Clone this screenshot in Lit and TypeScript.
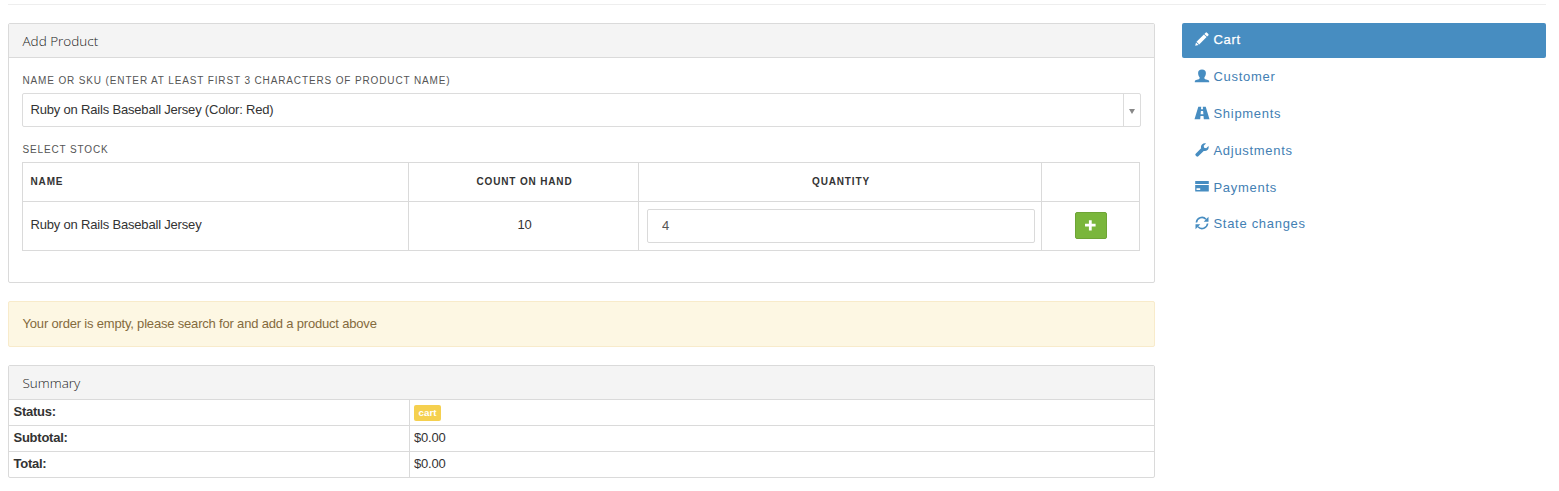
import { LitElement, html, css, svg } from "lit";
import { customElement } from "lit/decorators.js";
import { classMap } from "lit/directives/class-map.js";

const icons: Record<string, unknown> = {
  pencil: svg`<path d="M10.600 .7a1 1 0 0 1 1.400 0l1.300 1.300a1 1 0 0 1 0 1.400l-1.200 1.200-2.700-2.700z M8.900 2.400l2.700 2.700-7.400 7.400-2.700-2.700z M1 10.400l2.600 2.600-3.400.8z"/>`,
  user: svg`<path d="M7 .4c2.600 0 3.900 1.400 3.900 3.600 0 1.900-.7 3.200-1.500 4.200v1c0 .5 .3 .8 .8 1l2.700 .9c.8 .3 1.300 .8 1.300 1.600v.6H-.2v-.6c0-.8 .5-1.300 1.300-1.600L3.800 10.200c.5-.2 .8-.5 .8-1v-1C3.800 7.200 3.100 5.900 3.100 4 3.100 1.800 4.400 .4 7 .4z"/>`,
  road: svg`<path fill-rule="evenodd" d="M3.300 .8h2.900l-.2 2.400h2L7.800 .8h2.900L14.500 13.300H8.800L8.500 10h-3l-.3 3.300H-.5z M5.900 4.900 5.600 8.300h2.800l-.3-3.400z"/>`,
  wrench: svg`<path d="M13.500 2.900 11.200 5.200 9.100 4.800 8.700 2.800 11 .5C9.600 .1 8 .5 7 1.500 6 2.500 5.700 4 6.100 5.300L.7 10.700a1.350 1.350 0 0 0 0 1.900l.7.7a1.350 1.350 0 0 0 1.900 0L8.700 7.900c1.300.4 2.800.1 3.800-.9 1.100-1.100 1.400-2.700 1-4.100z"/>`,
  card: svg`<path fill-rule="evenodd" d="M.4 1h13.200l.2 .2V3.900H.2V1.200z M.2 5.100h13.600v6.100l-.2 .2H.4l-.2-.2z M1.500 8.200v1.800h3.700V8.200z"/>`,
  refresh: svg`<path d="M1.400 6.500A5.600 5.600 0 0 1 11 3.200M12.600 7.500A5.600 5.600 0 0 1 3 10.800" fill="none" stroke="currentColor" stroke-width="1.600"/><path d="M13.500 .7v5H8.700z M.5 13.300v-5h4.800z"/>`,
  plus: svg`<path d="M5.300 1.300h3v3.900h4.200v3H8.300v4.100h-3V8.200H1.100v-3h4.200z"/>`,
};

const icon = (name: string) =>
  html`<svg class="icon" viewBox="0 0 14 14" aria-hidden="true">${icons[name]}</svg>`;

const sections = [
  { label: "Cart", icon: "pencil", active: true },
  { label: "Customer", icon: "user" },
  { label: "Shipments", icon: "road" },
  { label: "Adjustments", icon: "wrench" },
  { label: "Payments", icon: "card" },
  { label: "State changes", icon: "refresh" },
];

@customElement("order-nav")
export class OrderNav extends LitElement {
  static styles = css`
    :host { display: block; }
    .list { display: flex; flex-direction: column; gap: 2px; }
    .item {
      display: flex; align-items: center; gap: 4.5px;
      box-sizing: border-box; height: 34.8px; padding: 0 13px;
      border-radius: 2px; text-decoration: none;
      font: 13px/18px "Liberation Sans", Arial, sans-serif; letter-spacing: .7px;
      color: #4380b3;
    }
    .icon { width: 14px; height: 14px; margin-bottom: 2px; fill: currentColor; color: #478dc1; overflow: visible; }
    .active, .active .icon { color: #fff; }
    .active { background: #478dc1; -webkit-text-stroke: .25px #fff; }
  `;
  render() {
    return html`<nav class="list">
      ${sections.map((s) => html`<a class=${classMap({ item: true, active: !!s.active })}>
        ${icon(s.icon)}<span>${s.label}</span></a>`)}
    </nav>`;
  }
}

@customElement("app-root")
export class AppRoot extends LitElement {
  static styles = css`
    :host {
      display: block; box-sizing: border-box; height: 491px; padding: 4px 13px 0 8px;
      background: #fff; color: #333; overflow: hidden;
      font: 13px/18px "Liberation Sans", Arial, sans-serif; letter-spacing: -.185px;
    }
    * { box-sizing: border-box; }
    .rule { height: 1px; background: #eee; margin-bottom: 18px; }
    .layout { display: grid; grid-template-columns: 1147px 364px; gap: 27px; align-items: start; }
    .main { display: flex; flex-direction: column; gap: 18px; }
    .panel { border: 1px solid #dadada; border-radius: 2px; }
    .add { height: 260px; }
    .heading {
      height: 34px; padding: 1px 13.5px 0; background: #f4f4f4; border-bottom: 1px solid #dadada;
      font: 300 13.5px/33px "Open Sans", sans-serif; color: #222; letter-spacing: 0;
    }
    .body { padding: 14px 13px 0; }
    .label {
      display: block; height: 18px; margin-bottom: 3px; padding-left: .4px; color: #555;
      font-size: 10px; line-height: 18px; letter-spacing: .865px; text-transform: uppercase;
    }
    .select {
      display: flex; height: 34px; width: 1119px; border: 1px solid #dcdcdc; border-radius: 2px;
      margin-bottom: 14px; line-height: 31px;
    }
    .chosen { flex: 1; padding-left: 7.5px; }
    .arrow { width: 17px; border-left: 1px solid #dcdcdc; display: grid; place-items: center; padding-top: 3px; }
    .arrow svg { width: 6px; height: 5px; fill: #888; }
    .stock { width: 1118px; border: 1px solid #dadada; border-width: 1px 0 0 1px; }
    .row { display: grid; grid-template-columns: 386px 230px 403px 98px; }
    .cell {
      display: flex; align-items: center; justify-content: center;
      border: solid #dadada; border-width: 0 1px 1px 0; padding: 0 6px 0 8px; height: 49px;
    }
    .row.head .cell { height: 39px; font-size: 10px; font-weight: bold; letter-spacing: .85px; text-transform: uppercase; }
    .cell:first-child { justify-content: flex-start; }
    .row .cell:first-child { padding-left: 7.5px; }
    .row .cell:last-child { padding: 0 7px 1px; }
    .text { padding-bottom: 3px; }
    .input {
      flex: 1; height: 34px; border: 1px solid #dadada; border-radius: 2px;
      padding: 0 14px 1px; font: inherit; color: #555; background: #fff; min-width: 0; outline: none;
    }
    .button {
      display: grid; place-items: center; width: 32px; height: 27px; padding: 0;
      background: #7ab63c; border: 1px solid #6ea436; border-radius: 2px; color: #fff;
    }
    .button .icon { width: 13px; height: 13px; fill: currentColor; }
    .alert {
      height: 46px; padding: 0 13.5px; line-height: 43px; color: #846a3d;
      background: #fdf7e3; border: 1px solid #f8ebcb; border-radius: 2px;
    }
    .line { display: grid; grid-template-columns: 401px 1fr; height: 26px; line-height: 23px; border-bottom: 1px solid #dadada; }
    .line:last-child { border-bottom: 0; height: 25px; }
    .term { padding-left: 4.5px; border-right: 1px solid #dadada; font-weight: bold; letter-spacing: -.25px; }
    .value { padding-left: 4px; }
    .badge {
      display: block; width: 27px; height: 16px; margin-top: 5px; border-radius: 2px; letter-spacing: 0;
      background: #f5d04f; color: #fff; font-size: 9.75px; font-weight: bold; line-height: 16px; text-align: center;
    }
  `;
  render() {
    return html`
      <div class="rule"></div>
      <div class="layout">
        <main class="main">
          <section class="panel add">
            <div class="heading">Add Product</div>
            <div class="body">
              <label class="label">Name or SKU (enter at least first 3 characters of product name)</label>
              <div class="select">
                <span class="chosen">Ruby on Rails Baseball Jersey (Color: Red)</span>
                <span class="arrow"><svg viewBox="0 0 6 5"><path d="M0 0h6L3 5z"/></svg></span>
              </div>
              <label class="label">Select stock</label>
              <div class="stock">
                <div class="row head">
                  <div class="cell">Name</div><div class="cell">Count on hand</div>
                  <div class="cell">Quantity</div><div class="cell"></div>
                </div>
                <div class="row">
                  <div class="cell"><span class="text">Ruby on Rails Baseball Jersey</span></div>
                  <div class="cell"><span class="text">10</span></div>
                  <div class="cell"><input class="input" .value=${"4"}></div>
                  <div class="cell"><button class="button" aria-label="Add">${icon("plus")}</button></div>
                </div>
              </div>
            </div>
          </section>
          <div class="alert">Your order is empty, please search for and add a product above</div>
          <section class="panel">
            <div class="heading">Summary</div>
            <div class="line"><div class="term">Status:</div><div class="value"><span class="badge">cart</span></div></div>
            <div class="line"><div class="term">Subtotal:</div><div class="value">$0.00</div></div>
            <div class="line"><div class="term">Total:</div><div class="value">$0.00</div></div>
          </section>
        </main>
        <order-nav></order-nav>
      </div>`;
  }
}
